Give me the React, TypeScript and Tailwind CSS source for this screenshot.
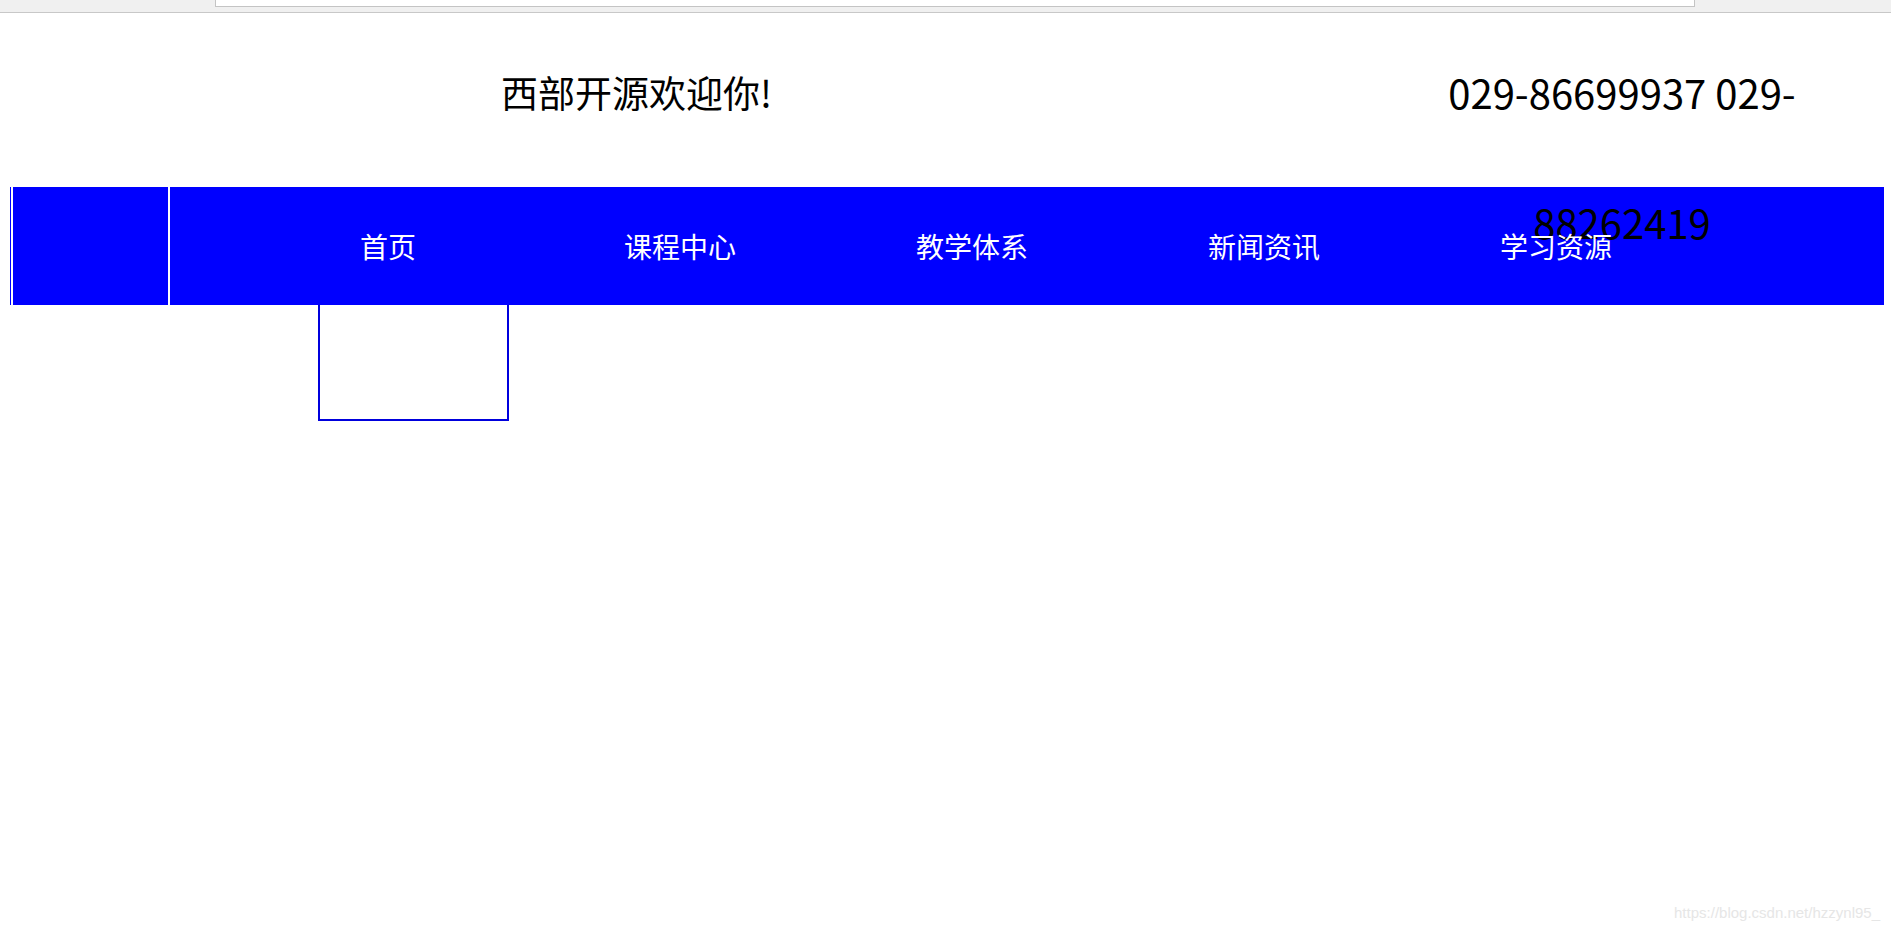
const navItems = ['首页', '课程中心', '教学体系', '新闻资讯', '学习资源'];

function BrowserStrip() {
  return (
    <div className="h-[13px] bg-[#f0f0f0] border-b border-[#c8c8c8] pl-[215px]">
      <div className="w-[1480px] h-[7px] bg-white border border-t-0 border-[#c4c4c4]" />
    </div>
  );
}

function Header() {
  // phone number spills past the header into the nav bar, like the original page
  return (
    <div className="relative z-10 mt-[14px] h-[160px] flex leading-[130px] text-black">
      <div className="w-[1273px] text-center text-[37px]">西部开源欢迎你!</div>
      <div className="ml-[149px] w-[400px] text-center text-[40px]">
        029-86699937 029-<wbr />88262419
      </div>
    </div>
  );
}

function Nav() {
  return (
    <div className="relative ml-[10px] w-[1874px] h-[118px] bg-[#0000ff] flex">
      <div className="w-[1px]" />
      <div className="w-[157px] border-l-2 border-white" />
      <div className="flex-1 border-l-2 border-white pl-[72px] flex">
        {navItems.map((item) => (
          <div key={item} className="relative z-20 w-[292px] text-center text-white text-[28px] leading-[118px]">
            {item}
          </div>
        ))}
      </div>
      {/* dropdown box */}
      <div className="absolute left-[308px] top-full w-[191px] h-[116px] border-2 border-t-0 border-[#0000dd] bg-white" />
    </div>
  );
}

export default function App() {
  return (
    <div
      className="relative h-[932px] bg-white overflow-hidden"
      style={{ fontFamily: '"Noto Sans CJK SC", "Noto Sans", sans-serif' }}
    >
      <BrowserStrip />
      <Header />
      <Nav />
      <div className="absolute right-[11px] bottom-[8px] text-[15px] text-[#e6e6e6] font-['Liberation_Sans',sans-serif]">
        https://blog.csdn.net/hzzynl95_
      </div>
    </div>
  );
}
